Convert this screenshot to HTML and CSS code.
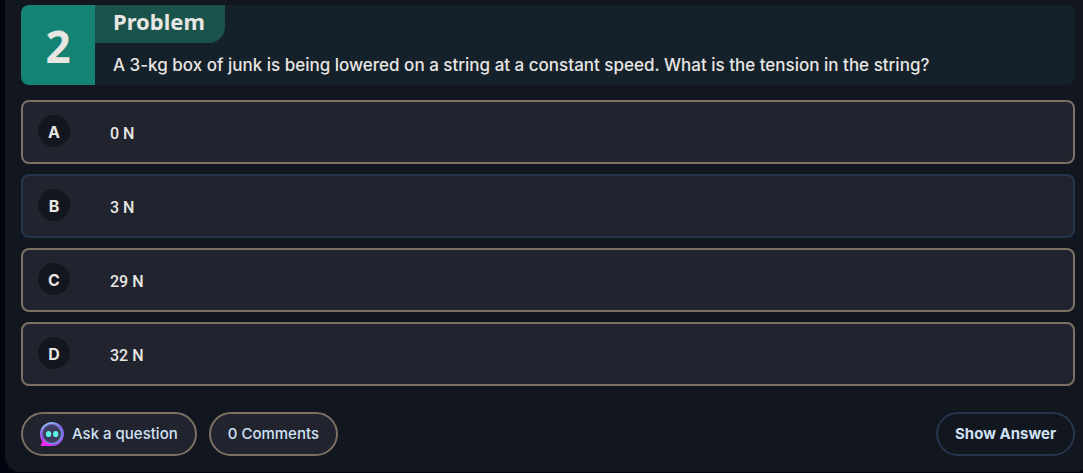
FILE: index.html
```html
<!DOCTYPE html>
<html lang="en">
<head>
<meta charset="utf-8">
<title>Problem 2</title>
<link rel="stylesheet" href="styles.css">
</head>
<body>
<main class="card">
  <header class="problem">
    <div class="number">2</div>
    <div class="prompt">
      <h1 class="tag">Problem</h1>
      <p class="question">A 3-kg box of junk is being lowered on a string at a constant speed. What is the tension in the string?</p>
    </div>
  </header>
  <div class="choices">
    <button class="choice"><span class="letter">A</span><span class="value">0 N</span></button>
    <button class="choice selected"><span class="letter">B</span><span class="value">3 N</span></button>
    <button class="choice"><span class="letter">C</span><span class="value">29 N</span></button>
    <button class="choice"><span class="letter">D</span><span class="value">32 N</span></button>
  </div>
  <footer class="actions">
    <button class="pill">
      <svg class="bot" viewBox="0 0 24 24" aria-hidden="true">
        <defs>
          <linearGradient id="ring" x1="0.25" y1="0" x2="0.7" y2="1">
            <stop offset="0" stop-color="#8fd0f5"/>
            <stop offset="0.4" stop-color="#8a62f5"/>
            <stop offset="0.75" stop-color="#8065f0"/>
            <stop offset="1" stop-color="#c044f5"/>
          </linearGradient>
          <linearGradient id="inner" x1="0" y1="0" x2="1" y2="1">
            <stop offset="0" stop-color="#6a48a8"/>
            <stop offset="1" stop-color="#68b4dc"/>
          </linearGradient>
          <linearGradient id="side" x1="0" y1="0" x2="0" y2="1">
            <stop offset="0.3" stop-color="#a458f5" stop-opacity="0"/>
            <stop offset="0.8" stop-color="#e030f5"/>
          </linearGradient>
        </defs>
        <circle cx="12" cy="12" r="12" fill="url(#ring)"/>
        <path d="M12 0A12 12 0 0 0 12 24Z" fill="url(#side)"/>
        <path d="M0.5 24L3 18L12 23.8V24Z" fill="#ee2af5"/>
        <circle cx="12" cy="12" r="9.6" fill="#3f3b5c" stroke="url(#inner)" stroke-width="1.2"/>
        <ellipse cx="8.6" cy="12" rx="2.7" ry="3.1" fill="#5df5e2"/>
        <ellipse cx="15.7" cy="12" rx="2.7" ry="3.1" fill="#5df5e2"/>
      </svg>
      <span>Ask a question</span>
    </button>
    <button class="pill">0 Comments</button>
    <button class="pill answer">Show Answer</button>
  </footer>
</main>
</body>
</html>
```
FILE: styles.css
```css
* {
  box-sizing: border-box;
}

body {
  margin: 0;
  background: #020510;
  color: #e8e6e3;
  font-family: Inter, "Liberation Sans", sans-serif;
  overflow: hidden;
}

.card {
  margin: 0 -8px 0 5px;
  padding: 5px 16px 16px;
  background: #12161f;
  border-radius: 0 0 16px 16px;
}

.problem {
  display: flex;
  min-height: 80px;
  border-radius: 8px;
  overflow: hidden;
  background: #14212a;
}

.number {
  display: flex;
  flex: none;
  align-items: center;
  justify-content: center;
  width: 74px;
  padding-top: 2px;
  background: #158374;
  font: 700 44px/60px "Noto Sans", sans-serif;
}

.prompt {
  flex: 1;
}

.tag {
  width: fit-content;
  height: 38px;
  margin: 0;
  padding: 0 20px 0 18px;
  border-bottom-right-radius: 16px;
  background: #1a534b;
  font: 700 22px/32px "Noto Sans", sans-serif;
}

.question {
  margin: 0;
  padding: 10px 18px 8px;
  font-size: 17px;
  font-weight: 500;
  line-height: 24px;
}

.choices {
  display: grid;
  gap: 10px;
  margin-top: 15px;
}

.choice {
  display: flex;
  align-items: center;
  gap: 40px;
  height: 64px;
  padding: 0 15px;
  border: 2px solid #7b7062;
  border-radius: 8px;
  background: #21242e;
  color: inherit;
  font: 500 16px/24px Roboto, sans-serif;
  text-align: left;
}

.selected {
  border-color: #26344e;
}

.letter {
  width: 32px;
  height: 32px;
  margin-bottom: 2px;
  border-radius: 50%;
  background: #12161f;
  font: 700 16px/34px Inter, sans-serif;
  text-align: center;
}

.value {
  padding-top: 3px;
}

.actions {
  display: flex;
  gap: 12px;
  margin-top: 26px;
}

.pill {
  display: flex;
  align-items: center;
  gap: 8px;
  height: 44px;
  padding: 0 17px;
  border: 2px solid #7b7062;
  border-radius: 22px;
  background: #21242e;
  color: #cfe2f5;
  font: 500 15px/24px Inter, sans-serif;
}

.answer {
  margin-left: auto;
  border-color: #26344e;
  background: #12161f;
  font-weight: 700;
}

.bot {
  width: 24px;
  height: 24px;
}
```
